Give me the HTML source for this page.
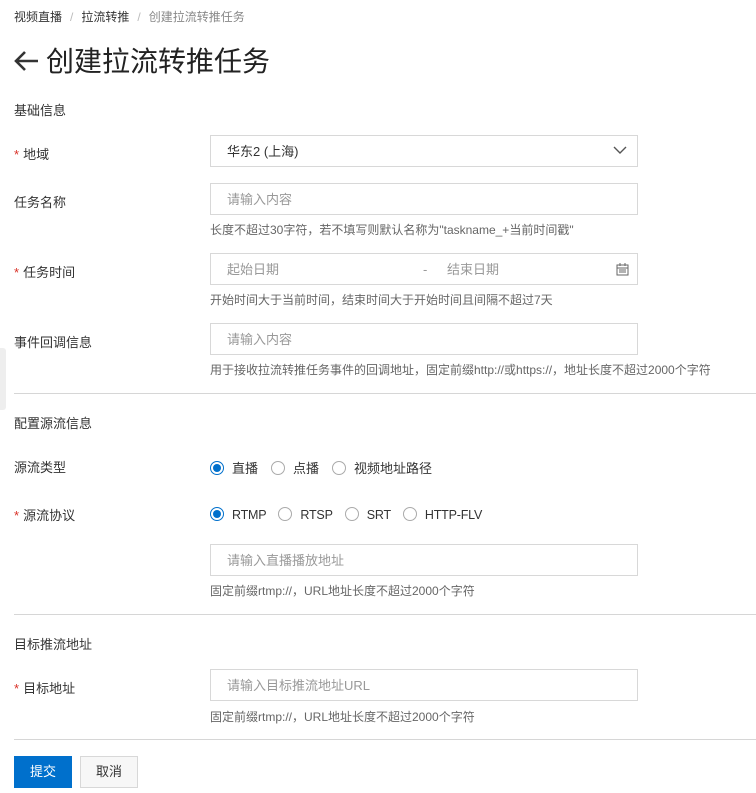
<!DOCTYPE html>
<html><head><meta charset="utf-8"><style>
*{box-sizing:border-box;margin:0;padding:0}
body{width:756px;height:793px;background:#fff;font-family:"Liberation Sans","Noto Sans CJK SC",sans-serif;color:#333;font-size:13px;position:relative;overflow:hidden}
.a{position:absolute;white-space:nowrap}
.bc{top:8px;left:14px;font-size:12px;color:#333}
.bc .s{color:#bbb;margin:0 8px}
.bc .c{color:#888}
.title{top:42px;left:14px;font-size:28px;color:#222;line-height:40px}
.sec{left:14px;font-size:13px;color:#333}
.lbl{left:14px;color:#333}
.lbl b{color:#d93026;font-weight:normal;margin-right:4px}
.in{left:210px;width:428px;height:32px;border:1px solid #d8d8d8;background:#fff;padding-left:16px;line-height:32px;color:#999}
.help{left:210px;font-size:12px;color:#666}
.hr{left:14px;width:742px;height:1px;background:#d6d6d6}
.r{display:inline-block;width:14px;height:14px;border:1px solid #aaa;border-radius:50%;vertical-align:-2px;margin-right:8px;position:relative}
.r.on{border-color:#0070cc}
.r.on:after{content:"";position:absolute;left:2px;top:2px;width:8px;height:8px;border-radius:50%;background:#0070cc}
.rg span.t{margin-right:13px;color:#333}
.rg2 span.t{font-size:12.5px;margin-right:12px;letter-spacing:-0.2px}
</style></head><body>
<div class="a" style="left:0;top:348px;width:6px;height:62px;background:#eee;border-radius:0 3px 3px 0"></div>
<div class="a bc">视频直播<span class="s">/</span>拉流转推<span class="s">/</span><span class="c">创建拉流转推任务</span></div>
<div class="a title"><svg width="26" height="22" viewBox="0 0 26 22" style="vertical-align:-1px;margin-right:6px"><path d="M2 11H24M11 2L2 11L11 20" fill="none" stroke="#333" stroke-width="2.6"/></svg>创建拉流转推任务</div>
<div class="a sec" style="top:100px">基础信息</div>
<div class="a lbl" style="top:144px"><b>*</b>地域</div>
<div class="a in" style="top:135px;color:#333">华东2 (上海)<svg class="a" style="right:10px;top:10px" width="14" height="9" viewBox="0 0 14 9"><path d="M1 1L7 7L13 1" fill="none" stroke="#555" stroke-width="1.4"/></svg></div>
<div class="a lbl" style="top:192px">任务名称</div>
<div class="a in" style="top:183px">请输入内容</div>
<div class="a help" style="top:221px">长度不超过30字符，若不填写则默认名称为"taskname_+当前时间戳"</div>
<div class="a lbl" style="top:262px"><b>*</b>任务时间</div>
<div class="a in" style="top:253px">起始日期<span class="a" style="left:212px">-</span><span class="a" style="left:236px">结束日期</span><svg class="a" style="right:8px;top:9px" width="13" height="13" viewBox="0 0 13 13"><rect x="1" y="2" width="11" height="10" fill="none" stroke="#666"/><path d="M1 5H12M3 7H10M3 9H10M4 0V3M9 0V3" stroke="#666"/></svg></div>
<div class="a help" style="top:291px">开始时间大于当前时间，结束时间大于开始时间且间隔不超过7天</div>
<div class="a lbl" style="top:332px">事件回调信息</div>
<div class="a in" style="top:323px">请输入内容</div>
<div class="a help" style="top:361px">用于接收拉流转推任务事件的回调地址，固定前缀http://或https://，地址长度不超过2000个字符</div>
<div class="a hr" style="top:393px"></div>
<div class="a sec" style="top:413px">配置源流信息</div>
<div class="a lbl" style="top:457px">源流类型</div>
<div class="a rg" style="left:210px;top:458px"><span class="r on"></span><span class="t">直播</span><span class="r"></span><span class="t">点播</span><span class="r"></span><span class="t">视频地址路径</span></div>
<div class="a lbl" style="top:505px"><b>*</b>源流协议</div>
<div class="a rg rg2" style="left:210px;top:507px"><span class="r on"></span><span class="t">RTMP</span><span class="r"></span><span class="t">RTSP</span><span class="r"></span><span class="t">SRT</span><span class="r"></span><span class="t">HTTP-FLV</span></div>
<div class="a in" style="top:544px">请输入直播播放地址</div>
<div class="a help" style="top:582px">固定前缀rtmp://，URL地址长度不超过2000个字符</div>
<div class="a hr" style="top:614px"></div>
<div class="a sec" style="top:634px">目标推流地址</div>
<div class="a lbl" style="top:678px"><b>*</b>目标地址</div>
<div class="a in" style="top:669px">请输入目标推流地址URL</div>
<div class="a help" style="top:708px">固定前缀rtmp://，URL地址长度不超过2000个字符</div>
<div class="a hr" style="top:739px"></div>
<div class="a" style="left:14px;top:756px;width:58px;height:32px;background:#0070cc;color:#fff;text-align:center;line-height:32px">提交</div>
<div class="a" style="left:80px;top:756px;width:58px;height:32px;background:#f7f7f7;border:1px solid #d8d8d8;color:#333;text-align:center;line-height:30px">取消</div>
</body></html>
